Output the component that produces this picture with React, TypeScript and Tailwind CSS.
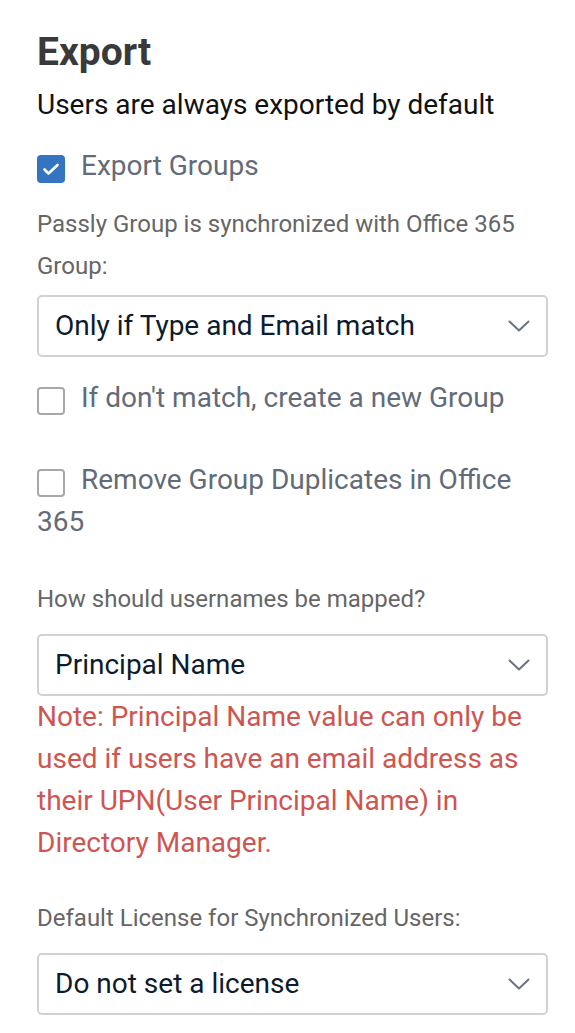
const Check = ({ checked, label }: { checked?: boolean; label: string }) => (
  <div className="text-[28px] leading-[42px] text-[#636b78]">
    <span
      className={
        "inline-block align-[-8px] w-[28px] h-[28px] mr-[16px] rounded-[4px] " +
        (checked ? "bg-[#3474c0] p-[5px]" : "border-2 border-[#a8a8a8] bg-white")
      }
    >
      {checked && (
        <svg viewBox="0 0 18 18" className="w-[18px] h-[18px]" fill="none" stroke="white" strokeWidth="2.6" strokeLinecap="round" strokeLinejoin="round">
          <path d="M2.5 9.5l4 4L15.5 5" />
        </svg>
      )}
    </span>
    {label}
  </div>
);

const Select = ({ value }: { value: string }) => (
  <div className="flex items-center justify-between h-[62px] border-2 border-[#d2d2d2] rounded-[5px] pl-[16px] pr-[16px] text-[28px] text-[#0d1b2e]">
    <span>{value}</span>
    <svg viewBox="0 0 22 12" className="w-[22px] h-[12px]" fill="none" stroke="#6b7280" strokeWidth="2" strokeLinecap="round" strokeLinejoin="round">
      <path d="M1.5 1.5L11 10.5L20.5 1.5" />
    </svg>
  </div>
);

export default function App() {
  return (
    <div className="bg-white min-h-screen pl-[37px] pr-[27px] pt-[28px] font-['Roboto',sans-serif] w-[575px]">
      <h1 className="text-[39px] leading-[48px] font-bold text-[#3a3a3a]">Export</h1>
      <p className="mt-[9px] text-[28px] leading-[40px] text-[#111]">Users are always exported by default</p>
      <div className="mt-[20px]">
        <Check checked label="Export Groups" />
      </div>
      <p className="mt-[16px] text-[24px] leading-[42px] text-[#666]">
        Passly Group is synchronized with Office 365 Group:
      </p>
      <div className="mt-[8px]">
        <Select value="Only if Type and Email match" />
      </div>
      <div className="mt-[20px]">
        <Check label="If don't match, create a new Group" />
      </div>
      <div className="mt-[40px]">
        <Check label="Remove Group Duplicates in Office 365" />
      </div>
      <p className="mt-[35px] text-[24px] leading-[42px] text-[#666]">How should usernames be mapped?</p>
      <div className="mt-[14px]">
        <Select value="Principal Name" />
      </div>
      <p className="text-[28px] leading-[42px] text-[#cf5650]">
        Note: Principal Name value can only be used if users have an email address as their UPN(User Principal Name) in
        Directory Manager.
      </p>
      <p className="mt-[33px] text-[24px] leading-[42px] text-[#666]">Default License for Synchronized Users:</p>
      <div className="mt-[14px]">
        <Select value="Do not set a license" />
      </div>
    </div>
  );
}
